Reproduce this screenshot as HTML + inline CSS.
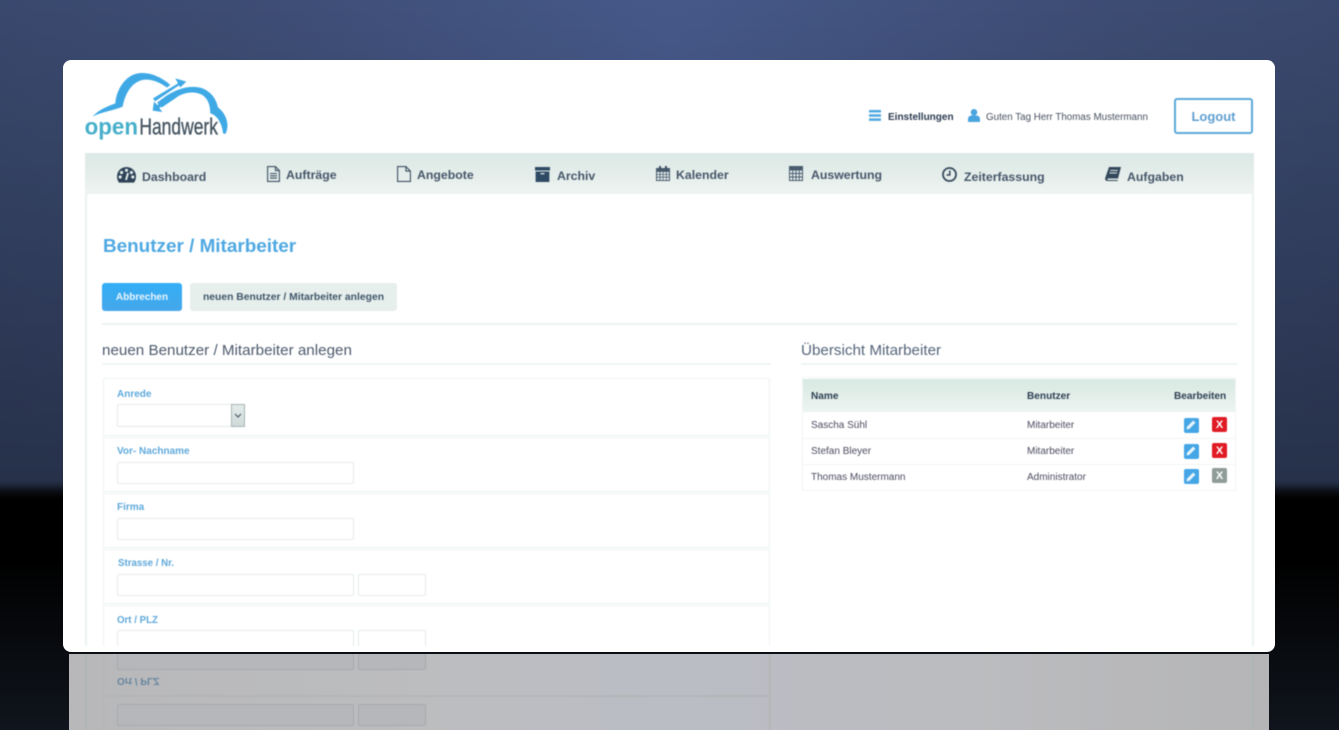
<!DOCTYPE html>
<html lang="de">
<head>
<meta charset="utf-8">
<title>openHandwerk</title>
<style>
html,body{margin:0;padding:0;width:1339px;height:730px;overflow:hidden;background:#000}
body{position:relative;font-family:"Liberation Sans",sans-serif}
#bg{position:absolute;left:0;top:0;width:1339px;height:730px;background:linear-gradient(180deg,rgba(0,0,0,0) 0,rgba(0,0,0,0) 485px,#000 502px,#000 560px,#10151d 730px),radial-gradient(ellipse 800px 700px at 670px 40px,#46598a 0,#3d4c73 55%,#37466a 100%)}
#bg2{position:absolute;left:0;top:0;width:1339px;height:502px;background:linear-gradient(180deg,rgba(0,0,0,0) 0,rgba(0,0,0,.3) 480px,#000 502px)}
#ref{position:absolute;left:69px;top:654px;width:1200px;height:76px;overflow:hidden;background:linear-gradient(90deg,#b8b8ba 0,#bcbdbf 30%,#bbbdc5 50%,#bbbcbf 75%,#b5b5b7 100%)}
#refin{position:absolute;left:0;top:0;width:1200px;height:76px;filter:blur(.5px)}
#line{position:absolute;left:69px;top:652px;width:1200px;height:2px;background:#0b0e14}
#card{position:absolute;left:63px;top:60px;width:1212px;height:592px;background:#fff;border-radius:8px;overflow:hidden}
#wrap{position:absolute;left:-63px;top:-60px;width:1339px;height:730px;filter:blur(.45px)}
.a{position:absolute;white-space:nowrap}
.nav{font-size:12.3px;font-weight:bold;color:#46566a;line-height:14px}
.lab{font-size:10px;font-weight:bold;color:#5fa9da;line-height:12px}
.inp{position:absolute;box-sizing:border-box;border:1px solid #e3ebeb;border-radius:2px;background:#fff;height:22px}
.row{position:absolute;box-sizing:border-box;left:103px;width:667px;border:1px solid #edf4f4;background:#fff}
.td{font-size:10px;color:#4b4b60;line-height:12px}
.th{font-size:10.100px;font-weight:bold;color:#2e3f52;line-height:12px}
.x{position:absolute;width:15px;height:15px;border-radius:2px;background:#e01b24;color:#fff;font-size:11px;font-weight:bold;text-align:center;line-height:16px}
.pen{position:absolute;width:15px;height:15px;border-radius:2px;background:#45a6e6}
.v{position:absolute;background:#e9f3f2}
svg{position:absolute;overflow:visible}
.r{position:absolute;box-sizing:border-box;border:1px solid #a9aaae;border-radius:2px;background:#b6b7bb}
.rv{position:absolute;top:0;height:76px;background:#aeb5b5}
</style>
</head>
<body>
<div id="bg"></div>
<div id="bg2"></div>

<div id="ref"><div id="refin">
  <div class="rv" style="left:16px;width:2px"></div>
  <div class="rv" style="left:34px;width:1px;background:#b2b4b6"></div>
  <div class="rv" style="left:700px;width:2px;background:#b2b4b6"></div>
  <div class="rv" style="left:1183px;width:2px"></div>
  <div style="position:absolute;left:34px;top:41px;width:668px;height:2px;background:#b3b5b8"></div>
  <div class="r" style="left:48px;top:-6px;width:237px;height:22px"></div>
  <div class="r" style="left:289px;top:-6px;width:68px;height:22px"></div>
  <div class="a" style="left:48px;top:20px;font-size:10px;font-weight:bold;color:#66859f;line-height:12px;transform:scaleY(-1)">Ort / PLZ</div>
  <div class="r" style="left:48px;top:50px;width:237px;height:22px"></div>
  <div class="r" style="left:289px;top:50px;width:68px;height:22px"></div>
</div></div>
<div id="line"></div>

<div id="card">
<div id="wrap">
  <!-- logo -->
  <svg style="left:82px;top:70px" width="150" height="72" viewBox="0 0 450 216">
    <path fill="#3fa9e6" d="M32,140C50,118 80,108 100,100C102,65 125,22 160,12C195,2 235,18 265,45L255,53C235,38 212,28 190,29C155,31 130,65 122,110C95,122 60,125 32,140Z"/>
    <path fill="#3fa9e6" d="M240,112L290,78C310,66 345,62 365,78C382,92 384,112 385,130C405,135 420,160 423,190L430,192C445,165 432,130 408,112C402,85 385,62 355,53C320,45 282,58 252,78L225,98Z"/>
    <path fill="#3fa9e6" d="M213,85L288,40L280,25L313,35L295,52L291,46L219,94Z"/>
    <path fill="#3fa9e6" d="M212,122L216,95L226,105L240,97L246,105L232,114L241,126Z"/>
    <text x="8" y="193" font-family="'Liberation Sans',sans-serif" font-size="70" font-weight="bold" fill="#46afca" textLength="160" lengthAdjust="spacingAndGlyphs">open</text>
    <text x="172" y="193" font-family="'Liberation Sans',sans-serif" font-size="70" fill="#43535f" stroke="#43535f" stroke-width="1" textLength="236" lengthAdjust="spacingAndGlyphs">Handwerk</text>
  </svg>

  <!-- top right -->
  <svg style="left:869px;top:110px" width="12" height="11" viewBox="0 0 12 11"><path fill="#4fa8e0" d="M0 0h12v2.500H0zM0 4.200h12v2.500H0zM0 8.400h12v2.500H0z"/></svg>
  <div class="a" style="left:888px;top:112px;font-size:10px;font-weight:bold;color:#2b3a50;line-height:12px">Einstellungen</div>
  <svg style="left:968px;top:109px" width="12" height="13" viewBox="0 0 12 13"><circle cx="6" cy="3.300" r="3.300" fill="#4aa5df"/><path fill="#4aa5df" d="M0 13V10C0 7.500 2 6.500 3.500 6.500h5c1.500 0 3.500 1 3.500 3.500V13z"/></svg>
  <div class="a" style="left:986px;top:112px;font-size:9.800px;color:#48505f;line-height:12px">Guten Tag Herr Thomas Mustermann</div>
  <div class="a" style="left:1174px;top:98px;width:79px;height:36px;box-sizing:border-box;border:2px solid #5ba9d8;border-radius:3px;text-align:center;font-size:13px;font-weight:bold;color:#5f9fd0;line-height:34px">Logout</div>

  <!-- nav -->
  <div class="a" style="left:85px;top:153px;width:1169px;height:41px;background:linear-gradient(180deg,#dde9e7 0,#e2ece9 40%,#eff4f1 100%)"></div>
  <div class="v" style="left:85px;top:194px;width:2px;height:452px"></div>
  <div class="v" style="left:1252px;top:194px;width:2px;height:452px"></div>

  <svg style="left:117px;top:167px" width="19" height="16" viewBox="0 0 19 16"><path fill="#2e4258" d="M9.500 0C4.200 0 0 4.200 0 9.500c0 2.300.7 4.500 2 6.100h15c1.300-1.600 2-3.800 2-6.100C19 4.200 14.800 0 9.500 0z"/><circle cx="9.500" cy="3.300" r="1.600" fill="#e1ece9"/><circle cx="4.600" cy="5.500" r="1.600" fill="#e1ece9"/><circle cx="14.400" cy="5.500" r="1.600" fill="#e1ece9"/><circle cx="3.200" cy="10" r="1.600" fill="#e1ece9"/><circle cx="15.800" cy="10" r="1.600" fill="#e1ece9"/><path stroke="#e1ece9" stroke-width="2" d="M9 13L11 6"/></svg>
  <div class="a nav" style="left:142px;top:170px">Dashboard</div>

  <svg style="left:267px;top:166px" width="13" height="16" viewBox="0 0 13 16"><path fill="none" stroke="#3e5064" stroke-width="1.100" d="M.6.6h7.800l4 4v10.800H.6zM8.400.6v4h4M3 7.500h7M3 9.800h7M3 12.100h7"/></svg>
  <div class="a nav" style="left:286px;top:168px">Aufträge</div>

  <svg style="left:397px;top:166px" width="14" height="16" viewBox="0 0 14 16"><path fill="none" stroke="#3e5064" stroke-width="1.100" d="M.6.600h8.300l4.500 4.500v10.300H.6zM8.900.6v4.500h4.500"/></svg>
  <div class="a nav" style="left:417px;top:168px">Angebote</div>

  <svg style="left:535px;top:167px" width="15" height="15" viewBox="0 0 15 15"><path fill="#2e4a64" d="M0 0h15v3.500H0zM.6 4.500h13.800V15H.6z"/><path fill="#dfe9e7" d="M5.500 6h4v1.300h-4z"/></svg>
  <div class="a nav" style="left:557px;top:169px">Archiv</div>

  <svg style="left:656px;top:166px" width="14" height="15" viewBox="0 0 14 15"><path fill="#4a5c70" d="M0 2h14v13H0z"/><path fill="#3e5064" d="M3 0h2v4H3zM9 0h2v4H9z"/><path fill="#e3ecea" d="M1 6h2.500v2H1zM4.300 6h2.500v2H4.300zM7.500 6H10v2H7.500zM10.700 6H13v2h-2.300zM1 8.800h2.500v2H1zM4.300 8.800h2.500v2H4.300zM7.500 8.800H10v2H7.500zM10.700 8.800H13v2h-2.300zM1 11.600h2.500V14H1zM4.300 11.600h2.500V14H4.300zM7.500 11.600H10V14H7.500zM10.700 11.600H13V14h-2.300z"/></svg>
  <div class="a nav" style="left:676px;top:168px">Kalender</div>

  <svg style="left:789px;top:166px" width="14" height="15" viewBox="0 0 14 15"><path fill="none" stroke="#4a5c70" stroke-width="1" d="M.5.500h13v14H.5zM.5 4h13M.5 7.500h13M.5 11h13M3.700 4v10.500M7 4v10.500M10.300 4v10.500"/><path fill="#4a5c70" d="M.5.500h13V3.500H.5z"/></svg>
  <div class="a nav" style="left:811px;top:168px">Auswertung</div>

  <svg style="left:942px;top:167px" width="15" height="15" viewBox="0 0 15 15"><circle cx="7.500" cy="7.500" r="6.500" fill="none" stroke="#36485c" stroke-width="1.800"/><path fill="none" stroke="#36485c" stroke-width="1.500" d="M7.800 3.500v4.500H4.500"/></svg>
  <div class="a nav" style="left:964px;top:170px">Zeiterfassung</div>

  <svg style="left:1105px;top:167px" width="16" height="14" viewBox="0 0 16 14"><path fill="#34485c" d="M4 0h12l-3 11.500H2.500C2 12.500 2.800 13 3.500 13H13l-.3 1H2.500C.8 14-.3 12.500.2 11z"/><path stroke="#e1ece9" stroke-width=".9" d="M5.200 3.500h7.500M4.500 6h7.500"/></svg>
  <div class="a nav" style="left:1127px;top:170px">Aufgaben</div>

  <!-- title + buttons -->
  <div class="a" style="left:103px;top:236px;font-size:18.900px;font-weight:bold;color:#4ea8e2;line-height:22px">Benutzer / Mitarbeiter</div>
  <div class="a" style="left:102px;top:283px;width:80px;height:28px;border-radius:3px;background:linear-gradient(180deg,#33aef6,#45a7ea);color:#e9f6fd;font-size:10px;font-weight:bold;text-align:center;line-height:29px">Abbrechen</div>
  <div class="a" style="left:190px;top:283px;width:207px;height:28px;border-radius:3px;background:#e6efec;color:#41566a;font-size:10.350px;font-weight:bold;text-align:center;line-height:29px">neuen Benutzer / Mitarbeiter anlegen</div>
  <div class="a" style="left:102px;top:323px;width:1135px;height:2px;background:#e9f4f4"></div>

  <!-- left -->
  <div class="a" style="left:102px;top:342px;font-size:15.200px;color:#4c5a6c;line-height:18px">neuen Benutzer / Mitarbeiter anlegen</div>
  <div class="a" style="left:102px;top:363px;width:669px;height:2px;background:#eff5f5"></div>

  <div class="row" style="top:378px;height:58px"></div>
  <div class="row" style="top:437px;height:55px"></div>
  <div class="row" style="top:493px;height:55px"></div>
  <div class="row" style="top:549px;height:55px"></div>
  <div class="row" style="top:605px;height:60px"></div>

  <div class="a lab" style="left:117px;top:389px">Anrede</div>
  <div class="inp" style="left:117px;top:404px;width:128px;height:23px"></div>
  <div class="a" style="left:231px;top:404px;width:14px;height:23px;box-sizing:border-box;border:1px solid #a9b4b4;background:linear-gradient(180deg,#e3ecea,#cfdad9)"></div>
  <svg style="left:234px;top:413px" width="8" height="5" viewBox="0 0 8 5"><path fill="none" stroke="#4a5a68" stroke-width="1.200" d="M1 1l3 3 3-3"/></svg>

  <div class="a lab" style="left:117px;top:446px">Vor- Nachname</div>
  <div class="inp" style="left:117px;top:462px;width:237px"></div>

  <div class="a lab" style="left:117px;top:502px">Firma</div>
  <div class="inp" style="left:117px;top:518px;width:237px"></div>

  <div class="a lab" style="left:118px;top:558px;font-size:9.700px">Strasse / Nr.</div>
  <div class="inp" style="left:117px;top:574px;width:237px"></div>
  <div class="inp" style="left:358px;top:574px;width:68px"></div>

  <div class="a lab" style="left:117px;top:614.500px;font-size:9.700px">Ort / PLZ</div>
  <div class="inp" style="left:117px;top:630px;width:237px"></div>
  <div class="inp" style="left:358px;top:630px;width:68px"></div>
  <div class="a" style="left:86px;top:646px;width:1170px;height:8px;background:#fff"></div>

  <!-- right -->
  <div class="a" style="left:801px;top:342px;font-size:15.200px;color:#55657a;line-height:18px">Übersicht Mitarbeiter</div>
  <div class="a" style="left:801px;top:363px;width:436px;height:2px;background:#eff5f5"></div>

  <div class="a" style="left:802px;top:377px;width:434px;height:114px;box-sizing:border-box;border:1px solid #f0f5f4;background:#fff"></div>
  <div class="a" style="left:803px;top:379px;width:432px;height:33px;background:linear-gradient(180deg,#d8e9e2,#edf4f1)"></div>
  <div class="a th" style="left:811px;top:391px">Name</div>
  <div class="a th" style="left:1027px;top:391px">Benutzer</div>
  <div class="a th" style="left:1174px;top:391px">Bearbeiten</div>

  <div class="a" style="left:803px;top:438px;width:432px;height:1px;background:#f1f5f4"></div>
  <div class="a" style="left:803px;top:464px;width:432px;height:1px;background:#f1f5f4"></div>

  <div class="a td" style="left:811px;top:420px">Sascha Sühl</div>
  <div class="a td" style="left:1027px;top:420px">Mitarbeiter</div>
  <div class="a td" style="left:811px;top:446px">Stefan Bleyer</div>
  <div class="a td" style="left:1027px;top:446px">Mitarbeiter</div>
  <div class="a td" style="left:811px;top:472px">Thomas Mustermann</div>
  <div class="a td" style="left:1027px;top:472px">Administrator</div>

  <div class="pen" style="left:1183.500px;top:417.500px"><svg style="left:2.500px;top:2.500px" width="10" height="10" viewBox="0 0 9 9"><path fill="#e8f4fc" d="M6.500.5l2 2-5.500 5.500L.5 8.500l.5-2.500z"/></svg></div>
  <div class="pen" style="left:1183.500px;top:443.500px"><svg style="left:2.500px;top:2.500px" width="10" height="10" viewBox="0 0 9 9"><path fill="#e8f4fc" d="M6.500.5l2 2-5.500 5.500L.5 8.500l.5-2.500z"/></svg></div>
  <div class="pen" style="left:1183.500px;top:469px"><svg style="left:2.500px;top:2.500px" width="10" height="10" viewBox="0 0 9 9"><path fill="#e8f4fc" d="M6.500.5l2 2-5.500 5.500L.5 8.500l.5-2.500z"/></svg></div>
  <div class="x" style="left:1212px;top:417px">X</div>
  <div class="x" style="left:1212px;top:442.500px">X</div>
  <div class="x" style="left:1212px;top:468px;background:#8f9c98">X</div>
</div>
</div>
</body>
</html>
